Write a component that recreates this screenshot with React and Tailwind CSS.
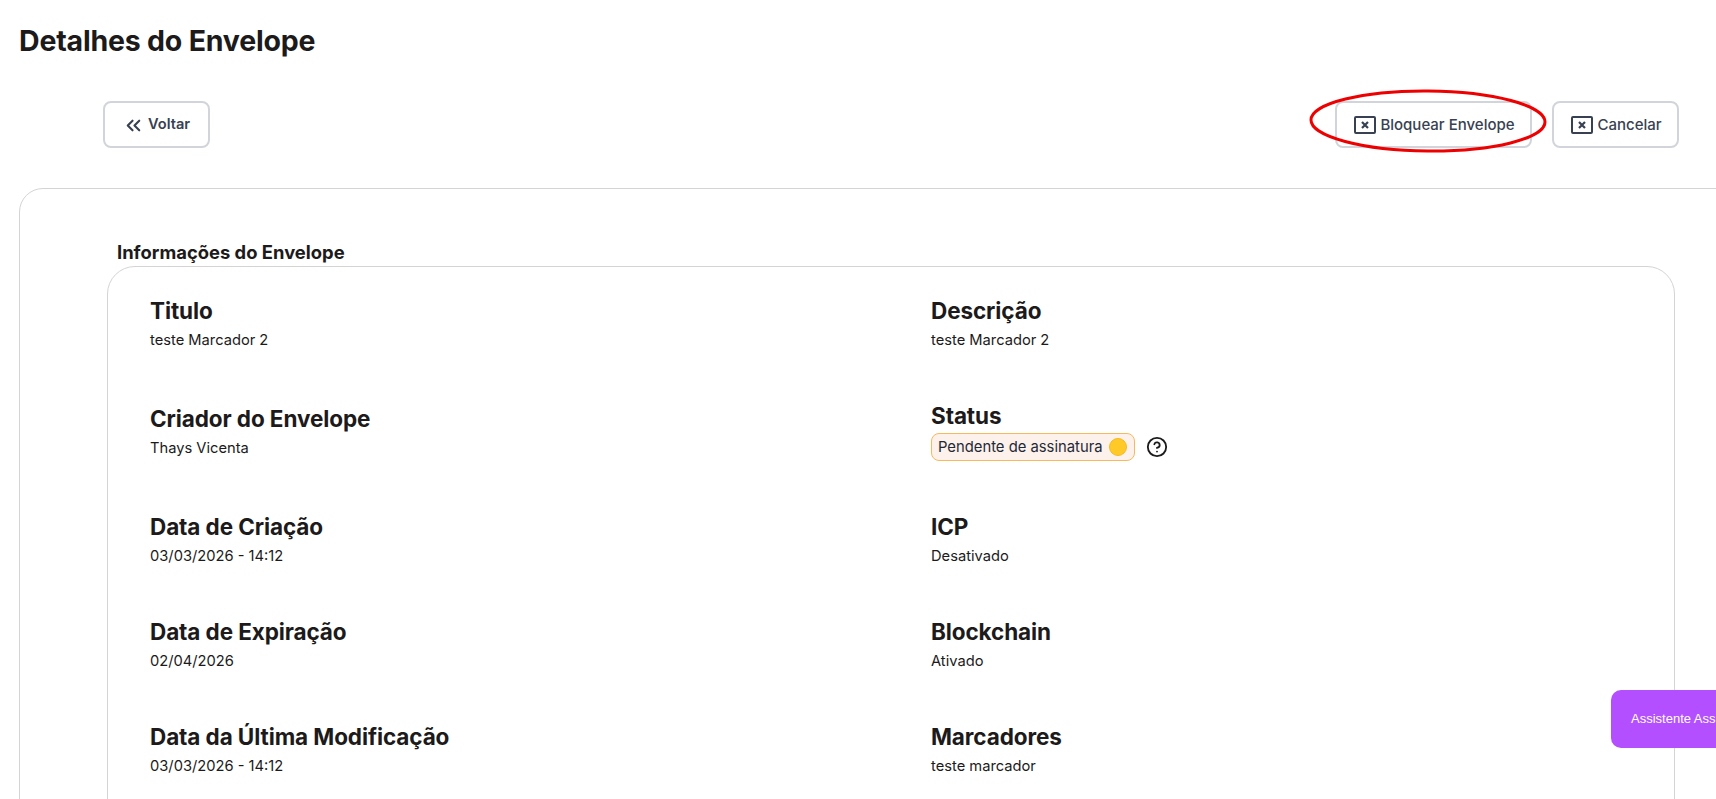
import React from 'react';
import { ChevronsLeft, CircleHelp } from 'lucide-react';

const BoxX = () => (
  <svg width="22" height="18" viewBox="0 0 22 18" fill="none" className="shrink-0">
    <rect x="1" y="1" width="20" height="16" rx="1" stroke="#374151" strokeWidth="2" />
    <path d="M8 6l6 6M14 6l-6 6" stroke="#374151" strokeWidth="2.2" />
  </svg>
);

const Field = ({ label, value, className = '' }) => (
  <div className={className}>
    <h3 className="-mt-[1px] text-[22.5px] leading-[28px] font-bold tracking-[-0.1px] text-[#1c1a1a]">{label}</h3>
    <p className="mt-[5px] text-[14.7px] leading-[20px] text-[#1c1a1a]">{value}</p>
  </div>
);

export default function App() {
  return (
    <div className="relative h-screen overflow-hidden bg-white font-['Inter',sans-serif]">
      <h1 className="pl-[19px] pt-[23px] text-[28.5px] leading-[36px] font-bold tracking-[-0.2px] text-[#1c1a1a]">Detalhes do Envelope</h1>

      {/* Actions */}
      <div className="mt-[42px] flex items-center pl-[103px] pr-[37px]">
        <button className="flex h-[47px] w-[107px] items-center gap-[3px] rounded-lg border-2 border-[#d1d5db] pl-[17px] pt-[1px] text-[14.6px] font-semibold text-[#374151]">
          <ChevronsLeft size={23} strokeWidth={2.2} />
          Voltar
        </button>
        <button className="ml-auto flex h-[47px] w-[197px] items-center justify-center gap-[4px] rounded-lg border-2 border-[#d1d5db] pl-[2px] pt-[1px] text-[15px] font-medium text-[#374151]">
          <BoxX />
          Bloquear Envelope
        </button>
        <button className="ml-[20px] flex h-[47px] w-[127px] items-center justify-center gap-[4px] rounded-lg border-2 border-[#d1d5db] pl-[2px] pt-[1px] text-[15px] font-medium text-[#374151]">
          <BoxX />
          Cancelar
        </button>
      </div>

      {/* Outer card */}
      <div className="ml-[19px] mt-[40px] w-[1780px] rounded-t-[24px] border border-[#d4d4d4] pl-[87px] pt-[51px]">
        <h2 className="pl-[10px] text-[18.4px] leading-[24px] font-bold text-[#1c1a1a]">Informações do Envelope</h2>
        <div className="mt-[2px] h-[560px] w-[1568px] rounded-t-[28px] border border-[#d4d4d4] pl-[42px] pt-[31px]">
          <div className="grid grid-cols-[781px_1fr]">
            <Field label="Titulo" value="teste Marcador 2" className="h-[108px]" />
            <Field label="Descrição" value="teste Marcador 2" />
            <Field label="Criador do Envelope" value="Thays Vicenta" className="h-[108px]" />
            <div className="-mt-[4px]">
              <h3 className="text-[22.5px] leading-[28px] font-bold tracking-[-0.1px] text-[#1c1a1a]">Status</h3>
              <div className="mt-[3px] flex items-center gap-[11px]">
                <span className="flex h-[28px] w-[204px] items-center gap-[6px] rounded-lg border border-[#f7b95c] bg-[#fdf1ec] pl-[6px] text-[14.8px] text-[#1f2937]">
                  Pendente de assinatura
                  <span className="h-[18px] w-[18px] rounded-full border border-[#f5b921] bg-[#ffca28]" />
                </span>
                <CircleHelp size={22} strokeWidth={2} className="text-[#1c1a1a]" />
              </div>
            </div>
            <Field label="Data de Criação" value="03/03/2026 - 14:12" className="h-[105px]" />
            <Field label="ICP" value="Desativado" />
            <Field label="Data de Expiração" value="02/04/2026" className="h-[105px]" />
            <Field label="Blockchain" value="Ativado" />
            <Field label="Data da Última Modificação" value="03/03/2026 - 14:12" />
            <Field label="Marcadores" value="teste marcador" />
          </div>
        </div>
      </div>

      {/* Red annotation over the block button */}
      <svg className="pointer-events-none absolute left-[1305px] top-[85px]" width="250" height="72" viewBox="0 0 250 72" fill="none">
        <ellipse cx="123" cy="36" rx="117" ry="30" transform="rotate(0.5 123 36)" stroke="#ee0000" strokeWidth="3" />
      </svg>

      {/* Assistant tab */}
      <div className="absolute left-[1611px] top-[690px] flex h-[58px] w-[160px] items-center whitespace-nowrap rounded-[10px] bg-[#b44fff] pl-[20px] font-['Liberation_Sans',sans-serif] text-[13px] text-white">
        Assistente Assinatura
      </div>
    </div>
  );
}
